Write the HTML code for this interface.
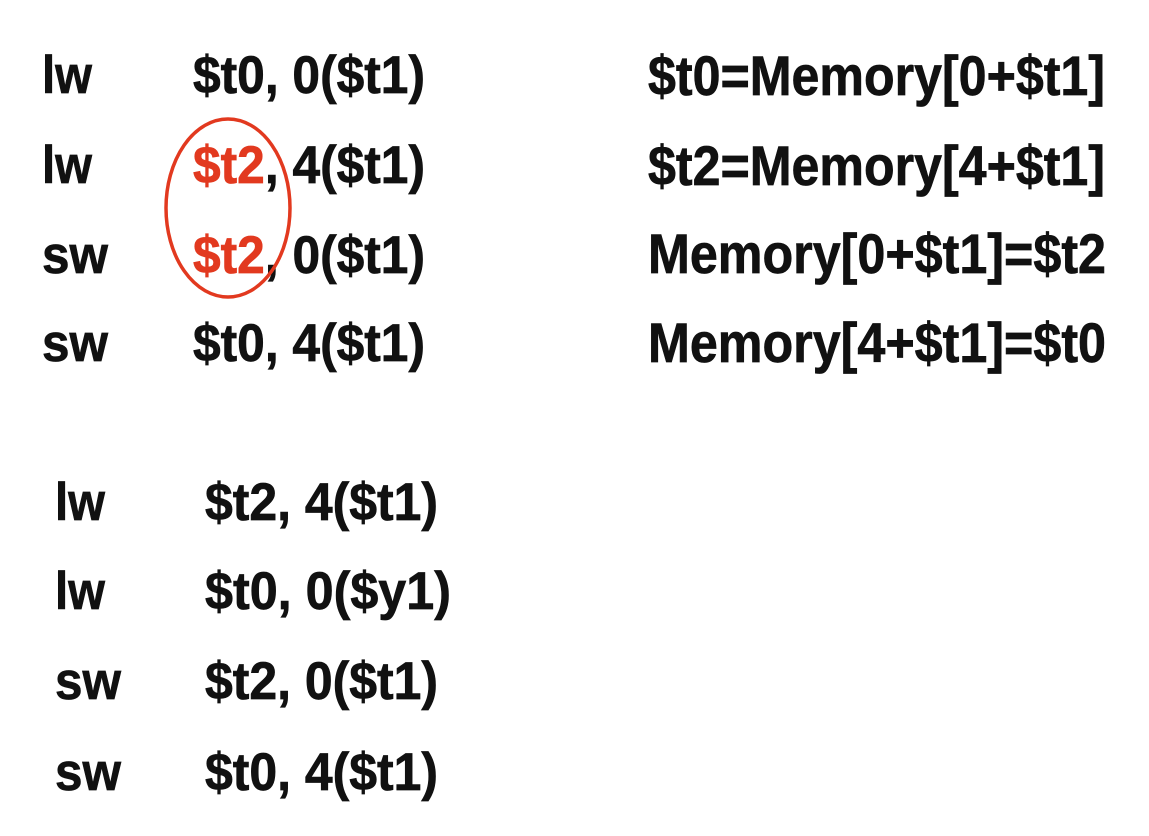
<!DOCTYPE html>
<html><head><meta charset="utf-8"><style>
html,body{margin:0;padding:0;background:#fff;width:1149px;height:836px;overflow:hidden}
svg{display:block}
text{font-family:"Liberation Sans",Arial,sans-serif;font-weight:bold;fill:#111;stroke:#111;stroke-width:0.7}
tspan.r{fill:#e2391f;stroke:#e2391f}
</style></head><body>
<svg width="1149" height="836" viewBox="0 0 1149 836">
<g font-size="53">
<text x="42" y="93" textLength="50" lengthAdjust="spacingAndGlyphs">lw</text>
<text x="193" y="93" textLength="232" lengthAdjust="spacingAndGlyphs">$t0, 0($t1)</text>
<text x="42" y="183" textLength="50" lengthAdjust="spacingAndGlyphs">lw</text>
<text x="193" y="183" textLength="232" lengthAdjust="spacingAndGlyphs"><tspan class="r">$t2</tspan>, 4($t1)</text>
<text x="42" y="273" textLength="66" lengthAdjust="spacingAndGlyphs">sw</text>
<text x="193" y="273" textLength="232" lengthAdjust="spacingAndGlyphs"><tspan class="r">$t2</tspan>, 0($t1)</text>
<text x="42" y="361" textLength="66" lengthAdjust="spacingAndGlyphs">sw</text>
<text x="193" y="361" textLength="232" lengthAdjust="spacingAndGlyphs">$t0, 4($t1)</text>
</g>
<g font-size="56">
<text x="648" y="95" textLength="457" lengthAdjust="spacingAndGlyphs">$t0=Memory[0+$t1]</text>
<text x="648" y="185" textLength="457" lengthAdjust="spacingAndGlyphs">$t2=Memory[4+$t1]</text>
<text x="648" y="273" textLength="458" lengthAdjust="spacingAndGlyphs">Memory[0+$t1]=$t2</text>
<text x="648" y="362" textLength="458" lengthAdjust="spacingAndGlyphs">Memory[4+$t1]=$t0</text>
</g>
<g font-size="53">
<text x="55" y="520" textLength="50" lengthAdjust="spacingAndGlyphs">lw</text>
<text x="205" y="520" textLength="233" lengthAdjust="spacingAndGlyphs">$t2, 4($t1)</text>
<text x="55" y="609" textLength="50" lengthAdjust="spacingAndGlyphs">lw</text>
<text x="205" y="609" textLength="246" lengthAdjust="spacingAndGlyphs">$t0, 0($y1)</text>
<text x="55" y="699" textLength="66" lengthAdjust="spacingAndGlyphs">sw</text>
<text x="205" y="699" textLength="233" lengthAdjust="spacingAndGlyphs">$t2, 0($t1)</text>
<text x="55" y="790" textLength="66" lengthAdjust="spacingAndGlyphs">sw</text>
<text x="205" y="790" textLength="233" lengthAdjust="spacingAndGlyphs">$t0, 4($t1)</text>
</g>
<ellipse cx="228" cy="208" rx="62" ry="89" fill="none" stroke="#e2391f" stroke-width="3.5"/>
</svg>
</body></html>
